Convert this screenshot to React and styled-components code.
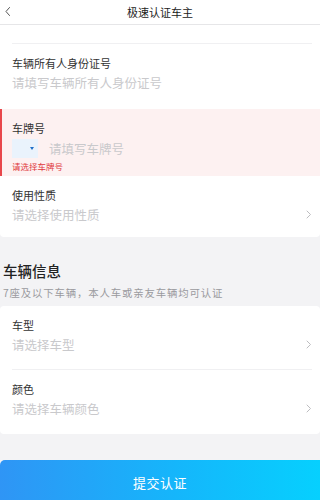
import React from 'react'
import styled, { createGlobalStyle } from 'styled-components'

const GlobalStyle = createGlobalStyle`
  html, body {
    margin: 0;
    padding: 0;
    background: #f3f3f5;
  }
  body {
    font-family: "Noto Sans CJK SC", "Noto Sans", sans-serif;
    -webkit-font-smoothing: antialiased;
  }
  * {
    box-sizing: border-box;
  }
`

const Page = styled.div`
  width: 100%;
  height: 500px;
  overflow: hidden;
  display: flex;
  flex-direction: column;
  background: #f3f3f5;
`

const Header = styled.div`
  position: relative;
  height: 25px;
  flex-shrink: 0;
  display: flex;
  align-items: center;
  justify-content: center;
  background: #fff;
  border-bottom: 1px solid #e6e6e8;
`

const BackButton = styled.div`
  position: absolute;
  left: 4px;
  top: 6px;
  display: flex;
`

const HeaderTitle = styled.div`
  font-size: 11px;
  line-height: 16px;
  color: #222;
`

const Card = styled.div`
  background: #fff;
  border-radius: ${({ $top }) => ($top ? '0 0 4px 4px' : '4px')};
  padding-top: ${({ $spacer }) => ($spacer ? '18px' : '0')};
  flex-shrink: 0;
`

const Divider = styled.div`
  height: 1px;
  margin: 0 8px 0 12px;
  background: #f0f0f2;
`

const Row = styled.div`
  position: relative;
  padding: 12px 12px ${({ $bottom }) => $bottom}px 12px;
  background: ${({ $error }) => ($error ? '#fdf1f1' : 'transparent')};
  border-left: ${({ $error }) => ($error ? '2px solid #e8474b' : 'none')};
  padding-left: ${({ $error }) => ($error ? '10px' : '12px')};
`

const Label = styled.div`
  font-size: 11px;
  line-height: 15px;
  color: #333;
`

const Placeholder = styled.div`
  margin-top: 3px;
  font-size: 12.5px;
  line-height: 18px;
  color: #c9c9cc;
`

const InputLine = styled.div`
  display: flex;
  align-items: center;
  gap: 11px;
  margin-top: 3px;
  height: 19px;
`

const PlateSelect = styled.div`
  width: 26px;
  height: 19px;
  background: #eaf3fc;
  display: flex;
  align-items: center;
  justify-content: flex-end;
  padding-right: 4px;
`

const Caret = styled.div`
  width: 0;
  height: 0;
  border-left: 2.5px solid transparent;
  border-right: 2.5px solid transparent;
  border-top: 3px solid #1f6fc9;
`

const InlinePlaceholder = styled.div`
  font-size: 12.5px;
  line-height: 18px;
  color: #c9c9cc;
`

const ErrorText = styled.div`
  margin-top: 3px;
  font-size: 8.5px;
  line-height: 10px;
  color: #e0393e;
`

const Chevron = styled.div`
  position: absolute;
  right: 8px;
  bottom: ${({ $offset }) => $offset}px;
  display: flex;
`

const Section = styled.div`
  padding: 24px 3px 6px 3px;
  flex-shrink: 0;
`

const SectionTitle = styled.div`
  font-size: 14.5px;
  line-height: 20px;
  font-weight: 500;
  color: #222;
`

const SectionNote = styled.div`
  margin-top: 5px;
  font-size: 10.4px;
  line-height: 14px;
  letter-spacing: 0.85px;
  color: #9a9a9e;
`

const Submit = styled.div`
  margin-top: 26px;
  height: 44px;
  flex-shrink: 0;
  display: flex;
  align-items: center;
  justify-content: center;
  border-top-left-radius: 5px;
  background: linear-gradient(90deg, #2f95f5 0%, #15b6fb 55%, #06d0fe 100%);
  color: #fff;
  font-size: 13px;
  letter-spacing: 0.5px;
`

function ChevronIcon() {
  return (
    <svg width="6" height="9" viewBox="0 0 6 9" fill="none">
      <path d="M1 1 L4.5 4.5 L1 8" stroke="#bdbdc0" strokeWidth="1" strokeLinecap="round" strokeLinejoin="round" />
    </svg>
  )
}

function BackIcon() {
  return (
    <svg width="8" height="11" viewBox="0 0 8 11" fill="none">
      <path d="M5.5 1.5 L2 5.5 L5.5 9.5" stroke="#555" strokeWidth="1" strokeLinecap="round" strokeLinejoin="round" />
    </svg>
  )
}

function Field({ label, placeholder, bottom, arrow = false }) {
  return (
    <Row $bottom={bottom}>
      <Label>{label}</Label>
      <Placeholder>{placeholder}</Placeholder>
      {arrow && (
        <Chevron $offset={bottom + 5}>
          <ChevronIcon />
        </Chevron>
      )}
    </Row>
  )
}

export default function App() {
  return (
    <Page>
      <GlobalStyle />
      <Header>
        <BackButton>
          <BackIcon />
        </BackButton>
        <HeaderTitle>极速认证车主</HeaderTitle>
      </Header>

      <Card $top $spacer>
        <Divider />
        <Field label="车辆所有人身份证号" placeholder="请填写车辆所有人身份证号" bottom={17} />
        <Row $error $bottom={5}>
          <Label>车牌号</Label>
          <InputLine>
            <PlateSelect>
              <Caret />
            </PlateSelect>
            <InlinePlaceholder>请填写车牌号</InlinePlaceholder>
          </InputLine>
          <ErrorText>请选择车牌号</ErrorText>
        </Row>
        <Field label="使用性质" placeholder="请选择使用性质" bottom={13} arrow />
      </Card>

      <Section>
        <SectionTitle>车辆信息</SectionTitle>
        <SectionNote>7座及以下车辆，本人车或亲友车辆均可认证</SectionNote>
      </Section>

      <Card>
        <Field label="车型" placeholder="请选择车型" bottom={15} arrow />
        <Divider />
        <Field label="颜色" placeholder="请选择车辆颜色" bottom={16} arrow />
      </Card>

      <Submit>提交认证</Submit>
    </Page>
  )
}
